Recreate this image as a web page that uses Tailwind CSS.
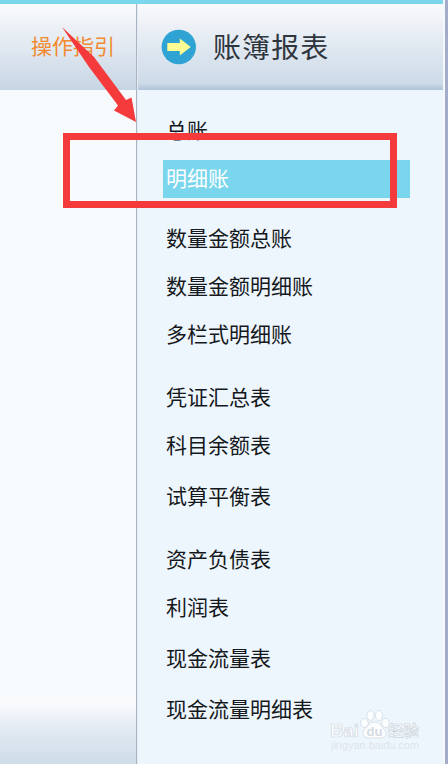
<!DOCTYPE html>
<html lang="zh-CN">
<head>
    <meta charset="UTF-8">
    <meta name="viewport" content="width=device-width, initial-scale=1.0">
    <title>账簿报表</title>
    <script src="https://cdn.jsdelivr.net/npm/@tailwindcss/browser@4"></script>
</head>
<body class="relative flex h-[764px] w-[448px] overflow-hidden bg-[#eef6fd] font-['Noto_Sans_CJK_SC',sans-serif]">
    <!-- Guide column -->
    <aside class="flex w-[136px] shrink-0 flex-col border-t-4 border-[#7ad7ee] bg-[#f6fafd]">
        <div class="flex h-[86px] items-center justify-end bg-linear-to-b from-[#f9fafc] via-[#e2e9f1] to-[#c6d5e4] pr-[21px] pb-1 text-[21px] leading-none text-[#f28a30]">
            <span>操作指引</span>
        </div>
        <div class="mt-auto h-[68px] bg-linear-to-b from-[#fafafc] from-10% via-[#e2e9f2] via-50% to-[#cddde8]"></div>
    </aside>

    <!-- Reports column -->
    <main class="flex w-[307px] shrink-0 flex-col border-t-4 border-[#7ad7ee]">
        <div class="flex grow">
            <div class="w-px bg-[#aab4c2]"></div>
            <div class="w-px bg-[#e3eaf2]"></div>
            <div class="flex-1">
                <header class="h-[86px] bg-linear-to-b from-[#fafafc] via-[#e0e8f1] via-50% to-[#cad9e7]">
                    <div class="flex h-20 items-center pt-[6px] pl-[23px]">
                        <svg class="size-9" viewBox="0 0 36 36">
                            <circle cx="17.800" cy="18" r="17.200" fill="#2ea3d4"/>
                            <path d="M6.300 14H18.800V9.500L29.800 18L18.800 26.500V22H6.300Z" fill="#fdfb93"/>
                        </svg>
                        <h1 class="ml-4 pb-0.5 text-[28px] leading-none tracking-[1.1px] text-[#2f353d]">账簿报表</h1>
                    </div>
                    <div class="h-1.5 bg-linear-to-b from-[#cad9e7] to-[#b0c3d9]"></div>
                </header>
                <ul class="mt-[17px] pl-[25px] text-[21px] leading-none text-[#15191c]">
                    <li class="flex h-12 items-center pb-1 pl-[3px]">总账</li>
                    <li class="flex h-12 items-center">
                        <a href="#" class="flex h-[38px] w-[247px] items-center bg-[#7ad6ec] pb-1 pl-[3px] text-white">明细账</a>
                    </li>
                    <li class="mt-3 flex h-12 items-center pb-1 pl-[3px]">数量金额总账</li>
                    <li class="flex h-12 items-center pb-1 pl-[3px]">数量金额明细账</li>
                    <li class="flex h-12 items-center pb-1 pl-[3px]">多栏式明细账</li>
                    <li class="mt-[15px] flex h-12 items-center pb-1 pl-[3px]">凭证汇总表</li>
                    <li class="flex h-12 items-center pb-1 pl-[3px]">科目余额表</li>
                    <li class="mt-[3px] flex h-12 items-center pb-1 pl-[3px]">试算平衡表</li>
                    <li class="mt-[15px] flex h-12 items-center pb-1 pl-[3px]">资产负债表</li>
                    <li class="flex h-12 items-center pb-1 pl-[3px]">利润表</li>
                    <li class="mt-[3px] flex h-12 items-center pb-1 pl-[3px]">现金流量表</li>
                    <li class="mt-[3px] flex h-12 items-center pb-1 pl-[3px]">现金流量明细表</li>
                </ul>
            </div>
        </div>
    </main>
    <div class="w-[5px] border-l-2 border-[#f3f8fc] bg-[#a3adca]"></div>

    <!-- Highlight frame and arrow -->
    <div class="absolute top-[133px] left-[63px] h-[75px] w-[334px] border-7 border-[#f43a3b]"></div>
    <svg class="absolute top-0 left-0 h-[130px] w-[140px]" viewBox="0 0 140 130">
        <path d="M62 27L94 57L126 100L131.500 97.500L136 122L114 110.500L118 105.500L89 67Z" fill="#f43a3b"/>
    </svg>

    <!-- Watermark -->
    <div class="absolute top-[703px] left-[329px] h-[52px] w-[96px]">
        <svg class="size-full" viewBox="0 0 96 52" font-family="Liberation Sans, Noto Sans CJK SC, sans-serif" fill="#fbfdff" stroke="#cfd6dc" stroke-width="0.7">
            <text x="1" y="34" font-size="19" font-weight="bold" textLength="29" lengthAdjust="spacingAndGlyphs">Bai</text>
            <ellipse cx="35.500" cy="20" rx="3.800" ry="4.600"/>
            <ellipse cx="41.500" cy="12.500" rx="3.600" ry="5"/>
            <ellipse cx="50" cy="12.500" rx="3.600" ry="5"/>
            <ellipse cx="56.500" cy="20" rx="3.800" ry="4.600"/>
            <path d="M45.500 19C50 19 51 22 55 26C59 30 57 35 51 35H40C34 35 32 30 36 26C40 22 41 19 45.500 19Z"/>
            <text x="37.500" y="33" font-size="12" font-weight="bold" fill="#d4dbe1" stroke="none" textLength="16" lengthAdjust="spacingAndGlyphs">du</text>
            <text x="59" y="33" font-size="15" font-weight="bold" textLength="31" lengthAdjust="spacingAndGlyphs">经验</text>
            <text x="2" y="46" font-size="10" stroke="none" fill="#dde4ea" textLength="88" lengthAdjust="spacingAndGlyphs">jingyan.baidu.com</text>
        </svg>
    </div>
</body>
</html>
